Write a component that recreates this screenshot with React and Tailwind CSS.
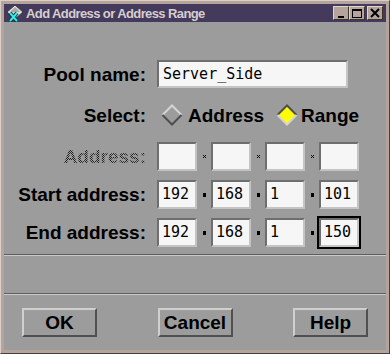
import React from "react";

const sans = "font-['Liberation_Sans',Arial,sans-serif]";
const mono = "font-['DejaVu_Sans_Mono',monospace]";

function Field({ value, w = "w-[40px]", focused = false }) {
  return (
    <div
      className={`${w} h-[29px] bg-[#f6f6f6] border-2 border-t-[#6e6e6e] border-l-[#6e6e6e] border-b-[#c4c4c4] border-r-[#c4c4c4] flex items-center pl-[3px] ${mono} text-[15px] text-black leading-none ${
        focused ? "outline-2 outline-black outline-offset-0" : ""
      }`}
    >
      {value}
    </div>
  );
}

function Dot({ disabled }) {
  return (
    <div className="w-[14px] flex justify-center items-center">
      {disabled ? (
        <svg width="3" height="3" viewBox="0 0 3 3" shapeRendering="crispEdges">
          <rect x="0" y="0" width="1" height="1" fill="#111" />
          <rect x="2" y="0" width="1" height="1" fill="#111" />
          <rect x="1" y="1" width="1" height="1" fill="#111" />
          <rect x="0" y="2" width="1" height="1" fill="#111" />
          <rect x="2" y="2" width="1" height="1" fill="#111" />
        </svg>
      ) : (
        <div className="w-[3px] h-[4px] bg-black" />
      )}
    </div>
  );
}

function IpRow({ label, values, disabled, focusLast, className = "" }) {
  return (
    <div className={`flex items-center h-[29px] ${className}`}>
      <div
        className={`w-[142px] text-right ${sans} font-bold text-[19px] leading-none ${
          disabled
            ? "bg-[image:repeating-conic-gradient(#222_0%_25%,transparent_0%_50%)] bg-[length:2px_2px] bg-clip-text text-transparent"
            : "text-black"
        }`}
      >
        {label}
      </div>
      <div className="ml-[11px] flex items-center">
        <Field value={values[0]} />
        <Dot disabled={disabled} />
        <Field value={values[1]} />
        <Dot disabled={disabled} />
        <Field value={values[2]} />
        <Dot disabled={disabled} />
        <Field value={values[3]} focused={focusLast} />
      </div>
    </div>
  );
}

function Diamond({ selected }) {
  const light = "#d4d4d4";
  const dark = "#4e4e4e";
  return (
    <svg width="22" height="22" viewBox="0 0 22 22">
      <polygon points="11,1.5 20.5,11 11,20.5 1.5,11" fill={selected ? "#ffff00" : "#9c9c9c"} />
      <polyline points="1.5,11 11,1.5 20.5,11" fill="none" stroke={selected ? dark : light} strokeWidth="2" />
      <polyline points="20.5,11 11,20.5 1.5,11" fill="none" stroke={selected ? light : dark} strokeWidth="2" />
    </svg>
  );
}

function Button({ children }) {
  return (
    <div
      className={`w-[75px] h-[29px] border-2 border-t-[#cfcfcf] border-l-[#cfcfcf] border-b-[#505050] border-r-[#505050] flex items-center justify-center ${sans} font-bold text-[19px] text-black leading-none`}
    >
      {children}
    </div>
  );
}

function TitleBtn({ children }) {
  return (
    <div className="w-[16px] h-[14px] bg-[#b4a49c] border border-t-[#e0d4cc] border-l-[#e0d4cc] border-b-[#3c3430] border-r-[#3c3430] flex items-center justify-center">
      {children}
    </div>
  );
}

export default function App() {
  return (
    <div className="w-[390px] h-[354px] bg-[#b4a49c] border border-t-[#ddd0c8] border-l-[#ddd0c8] border-b-[#4a403a] border-r-[#4a403a] p-[3px] flex flex-col">
      {/* Title bar */}
      <div className="h-[18px] bg-[#433a5c] flex items-center pl-[2px] pr-[3px]">
        <svg width="18" height="18" viewBox="0 0 18 18">
          <polygon points="9,1 17,8 9,15 1,8" fill="#dcdcdc" stroke="#3a3a3a" strokeWidth="1" />
          <polygon points="9,3 14,8 9,8 4,8" fill="#a8a8a8" />
          <path d="M4 9 L11 17 M11 9 L4 17" stroke="#0a3a3a" strokeWidth="4" />
          <path d="M4 9 L11 17 M11 9 L4 17" stroke="#38e8e8" strokeWidth="2" />
        </svg>
        <span className={`ml-[2px] ${sans} font-bold text-[13px] tracking-[-0.6px] text-[#d6cece] leading-none`}>
          Add Address or Address Range
        </span>
        <div className="ml-auto flex items-center">
          <TitleBtn>
            <div className="w-[6px] h-[2px] bg-black mt-[7px]" />
          </TitleBtn>
          <TitleBtn>
            <div className="w-[10px] h-[9px] border border-black border-t-2" />
          </TitleBtn>
          <div className="w-[2px]" />
          <TitleBtn>
            <svg width="10" height="10" viewBox="0 0 10 10">
              <path d="M1 1 L9 9 M9 1 L1 9" stroke="#000" strokeWidth="2" />
            </svg>
          </TitleBtn>
        </div>
      </div>

      {/* Body */}
      <div className="flex-1 bg-[#9c9c9c] flex flex-col">
        {/* Pool name */}
        <div className="flex items-center h-[28px] mt-[38px]">
          <div className={`w-[142px] text-right ${sans} font-bold text-[19px] text-black leading-none`}>
            Pool name:
          </div>
          <div className="ml-[11px]">
            <div
              className={`w-[191px] h-[28px] bg-[#f6f6f6] border-2 border-t-[#6e6e6e] border-l-[#6e6e6e] border-b-[#c4c4c4] border-r-[#c4c4c4] flex items-center pl-[4px] ${mono} text-[15px] text-black leading-none`}
            >
              Server_Side
            </div>
          </div>
        </div>

        {/* Select */}
        <div className="flex items-center h-[22px] mt-[16px]">
          <div className={`w-[142px] text-right ${sans} font-bold text-[19px] text-black leading-none`}>
            Select:
          </div>
          <div className={`ml-[15px] flex items-center ${sans} font-bold text-[19px] text-black leading-none`}>
            <Diamond selected={false} />
            <span className="ml-[5px]">Address</span>
            <span className="ml-[12px]">
              <Diamond selected={true} />
            </span>
            <span className="ml-[3px]">Range</span>
          </div>
        </div>

        <IpRow label="Address:" values={["", "", "", ""]} disabled className="mt-[16px]" />
        <IpRow label="Start address:" values={["192", "168", "1", "101"]} className="mt-[9px]" />
        <IpRow label="End address:" values={["192", "168", "1", "150"]} focusLast className="mt-[9px]" />

        {/* separator 1 */}
        <div className="mt-[7px] h-[1px] bg-[#5e5e5e]" />
        <div className="h-[1px] bg-[#cacaca]" />

        {/* separator 2 */}
        <div className="mt-[37px] h-[1px] bg-[#5e5e5e]" />
        <div className="h-[1px] bg-[#cacaca]" />

        {/* Buttons */}
        <div className="mt-[13px] flex justify-between px-[18px]">
          <Button>OK</Button>
          <Button>Cancel</Button>
          <Button>Help</Button>
        </div>
      </div>
    </div>
  );
}
